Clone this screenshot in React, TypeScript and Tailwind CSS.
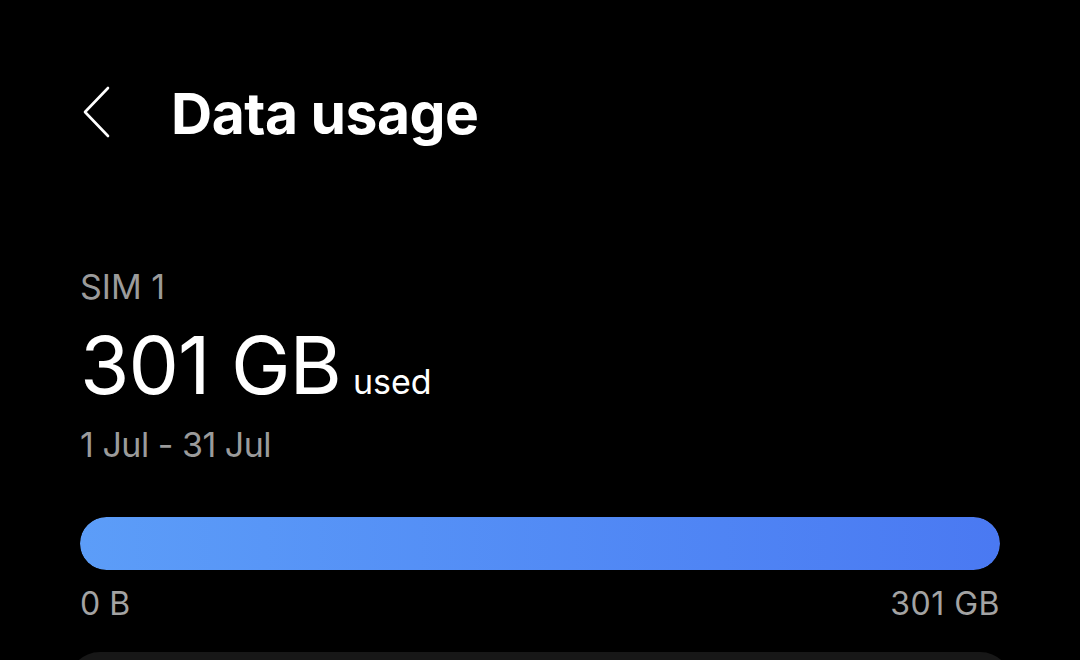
import React from "react";

function BackChevron() {
  return (
    <svg width="34" height="56" viewBox="0 0 34 56" fill="none" className="block">
      <path d="M28 3 L5 27 L28 51" stroke="#ffffff" strokeWidth="2.6" strokeLinecap="round" strokeLinejoin="round" />
    </svg>
  );
}

export default function App() {
  const used = 301;
  const total = 301;
  const pct = (used / total) * 100;
  return (
    <div
      className="w-[1080px] h-[660px] bg-black text-white overflow-hidden flex flex-col"
      style={{ fontFamily: "Inter, 'Noto Sans', sans-serif" }}
    >
      <header className="flex items-center h-[112px] mt-[57px] pl-[80px] shrink-0">
        <BackChevron />
        <h1 className="ml-[57px] text-[57px] font-bold tracking-[-0.5px] leading-none">Data usage</h1>
      </header>

      <section className="flex flex-col px-[80px] mt-[101px] shrink-0">
        <div className="text-[34px] text-[#9b9b9b] leading-none">SIM 1</div>
        <div className="flex items-baseline mt-[21px]">
          <span className="text-[80px] leading-none tracking-[-1px]">301 GB</span>
          <span className="ml-[12px] text-[34px] leading-none">used</span>
        </div>
        <div className="text-[34px] text-[#9b9b9b] leading-none mt-[23px] tracking-[-0.5px]">1 Jul - 31 Jul</div>

        <div className="mt-[55px] h-[53px] rounded-full bg-[#1c1c1c] overflow-hidden">
          <div
            className="h-full rounded-full bg-gradient-to-r from-[#5c9df8] to-[#4a79f2]"
            style={{ width: `${pct}%` }}
          />
        </div>
        <div className="flex justify-between mt-[18px] text-[32px] text-[#a3a3a3] leading-none">
          <span>0 B</span>
          <span className="tracking-[0.5px]">301 GB</span>
        </div>
      </section>

      <div className="mx-[68px] mt-[32px] h-[80px] rounded-t-[32px] bg-[#171717] shrink-0" />
    </div>
  );
}
